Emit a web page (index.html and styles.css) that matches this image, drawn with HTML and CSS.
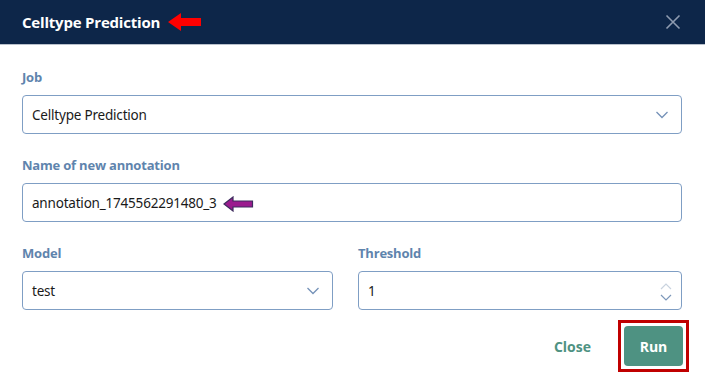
FILE: index.html
```html
<!DOCTYPE html>
<html>
<head>
<meta charset="utf-8">
<link rel="stylesheet" href="styles.css">
</head>
<body>
<div class="dialog">
  <header class="head">
    <div class="title-wrap">
      <span class="title">Celltype Prediction</span>
      <svg class="red-arrow" width="34" height="18" viewBox="0 0 34 18"><polygon points="0,9 13,0 13,5 33,5 33,13 13,13 13,18" fill="#ff0000"/></svg>
    </div>
    <svg class="close-x" width="16" height="16" viewBox="0 0 16 16"><path d="M1.5 1.5 L14.5 14.5 M14.5 1.5 L1.5 14.5" stroke="#8e9bb0" stroke-width="1.6" fill="none"/></svg>
  </header>
  <main class="body">
    <div class="field">
      <label class="label">Job</label>
      <div class="box">
        <span class="val grow">Celltype Prediction</span>
        <svg class="chev" width="14" height="8" viewBox="0 0 14 8"><path d="M1.5 1 L7 6.5 L12.5 1" stroke="#7592b8" stroke-width="1.3" fill="none"/></svg>
      </div>
    </div>
    <div class="field">
      <label class="label">Name of new annotation</label>
      <div class="box">
        <span class="val">annotation_1745562291480_3</span>
        <svg class="purple-arrow" width="31" height="16" viewBox="0 0 31 16"><polygon points="1,8 10,1 10,5 29.5,5 29.5,11 10,11 10,15" fill="#9b1b8e" stroke="#3e2c5e" stroke-width="1.2"/></svg>
      </div>
    </div>
    <div class="row">
      <div class="field">
        <label class="label">Model</label>
        <div class="box">
          <span class="val grow">test</span>
          <svg class="chev" width="14" height="8" viewBox="0 0 14 8"><path d="M1.5 1 L7 6.5 L12.5 1" stroke="#7592b8" stroke-width="1.3" fill="none"/></svg>
        </div>
      </div>
      <div class="field">
        <label class="label">Threshold</label>
        <div class="box">
          <span class="val grow num">1</span>
          <div class="spin">
            <svg width="12" height="7" viewBox="0 0 12 7"><path d="M1 6 L6 1 L11 6" stroke="#c9d3df" stroke-width="1.2" fill="none"/></svg>
            <svg width="12" height="7" viewBox="0 0 12 7"><path d="M1 1 L6 6 L11 1" stroke="#7d98ba" stroke-width="1.2" fill="none"/></svg>
          </div>
        </div>
      </div>
    </div>
    <div class="actions">
      <button class="btn-close">Close</button>
      <div class="run-outline"><button class="btn-run">Run</button></div>
    </div>
  </main>
</div>
</body>
</html>
```
FILE: styles.css
```css
* { box-sizing: border-box; }
html, body { margin: 0; padding: 0; background: #ffffff; }
.dialog { width: 705px; height: 375px; font-family: "Open Sans", "Noto Sans", sans-serif; }
.head {
  height: 45px;
  background: #0d2649;
  border-bottom: 1px solid #b9c1cc;
  display: flex;
  align-items: center;
  justify-content: space-between;
  padding: 0 22px 1px 22px;
}
.title-wrap { display: flex; align-items: center; gap: 8px; }
.title { color: #ffffff; font-weight: 700; font-size: 15px; letter-spacing: -0.2px; }
.red-arrow { margin-top: 1px; }
.close-x { margin-right: 2px; }
.body { padding: 23px 23px 0 22px; }
.field { display: flex; flex-direction: column; }
.label {
  color: #5f84ad;
  font-weight: 700;
  font-size: 13px;
  letter-spacing: -0.2px;
  line-height: 18px;
  margin-bottom: 9px;
}
.box {
  height: 39px;
  border: 1.5px solid #7f9ec4;
  border-radius: 4px;
  display: flex;
  align-items: center;
  padding: 0 12px 0 9px;
  margin-bottom: 22px;
}
.val { color: #1a1a1a; font-size: 13.5px; letter-spacing: -0.2px; font-family: "Noto Sans", sans-serif; }
.grow { flex: 1; }
.purple-arrow { margin-left: 6px; margin-top: 2px; }
.row { display: grid; grid-template-columns: 311px 324px; column-gap: 25px; }
.spin { display: flex; flex-direction: column; gap: 4px; margin-right: -3px; margin-top: 2px; }
.actions { display: flex; justify-content: flex-end; align-items: center; gap: 27px; margin-top: -12px; margin-right: -7px; }
.btn-close {
  background: none; border: none; padding: 0;
  color: #4e9282; font-weight: 700; font-size: 14px;
  font-family: "Open Sans", "Noto Sans", sans-serif;
}
.run-outline { border: 3px solid #c00000; padding: 3px; }
.btn-run {
  width: 59px; height: 40px;
  background: #4e9282; color: #ffffff;
  border: none; border-radius: 4px;
  font-weight: 700; font-size: 14px;
  font-family: "Open Sans", "Noto Sans", sans-serif;
}
```
